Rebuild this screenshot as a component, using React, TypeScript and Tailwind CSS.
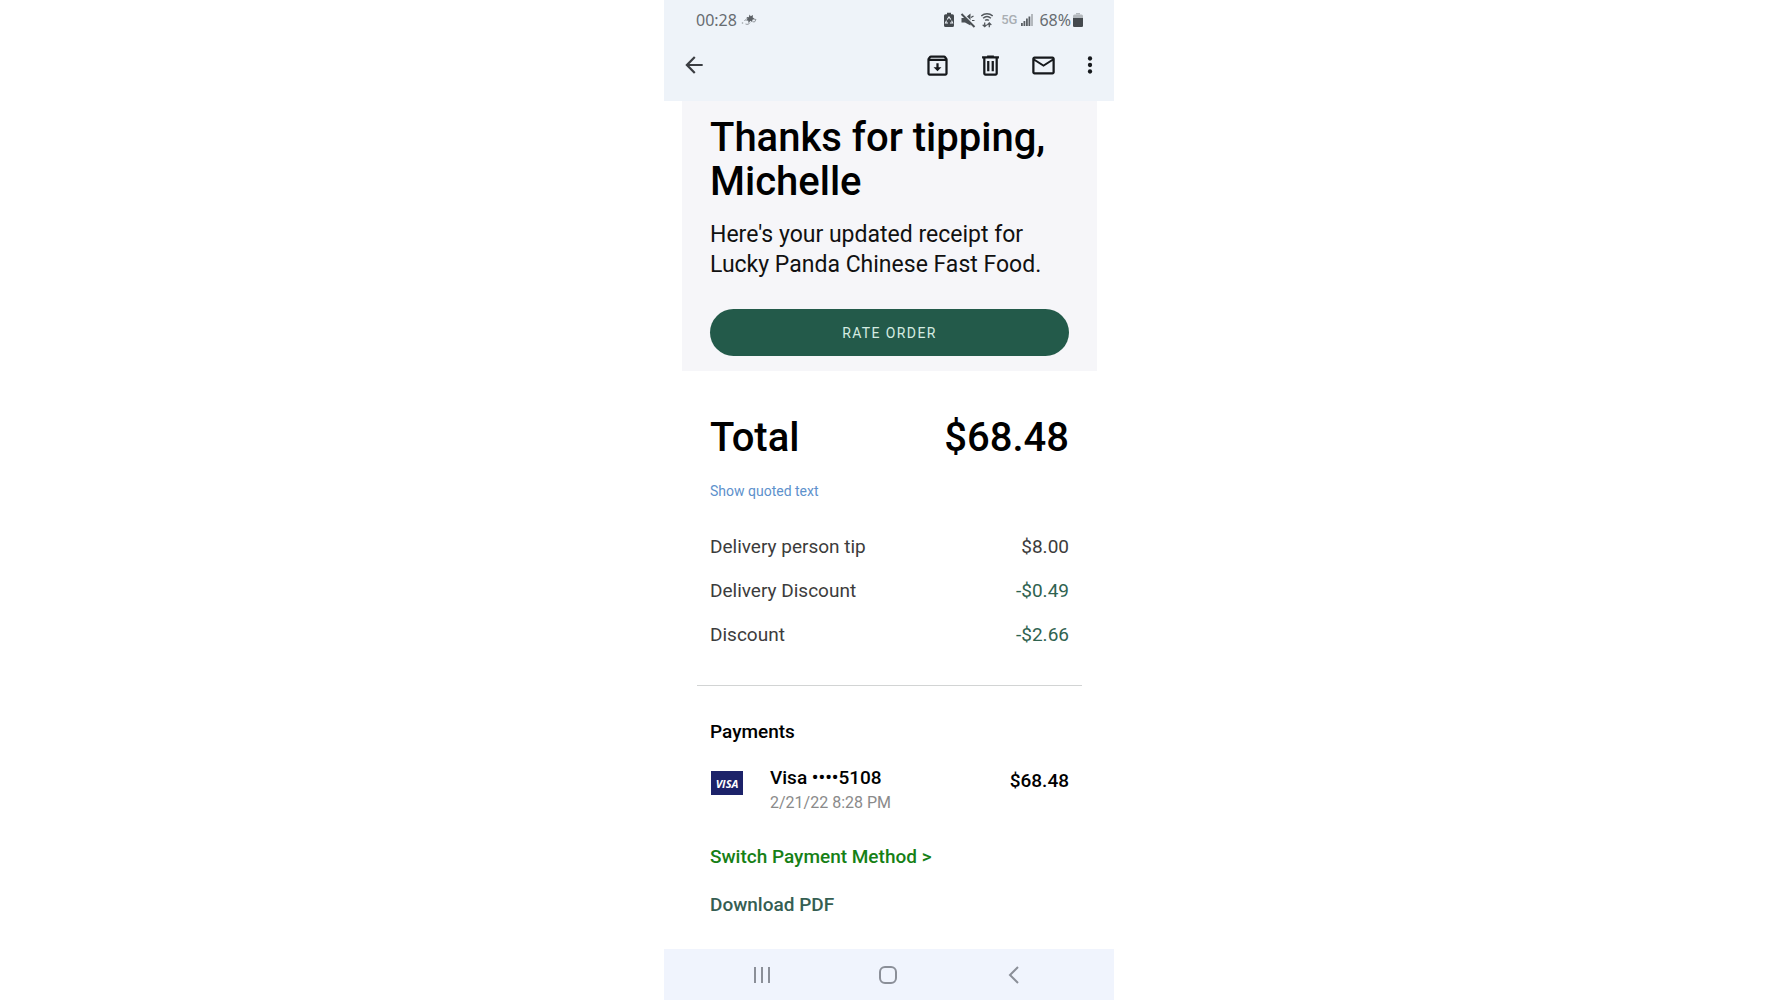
import React from "react";

type Item = { label: string; amount: string; discount?: boolean };

const items: Item[] = [
  { label: "Delivery person tip", amount: "$8.00" },
  { label: "Delivery Discount", amount: "-$0.49", discount: true },
  { label: "Discount", amount: "-$2.66", discount: true },
];

function StatusBar() {
  return (
    <div className="flex h-[39px] items-center pl-8 pr-[30px] font-['Noto_Sans',sans-serif] text-base leading-6 text-[#676c71]">
      <span>00:28</span>
      <svg className="ml-1 h-4 w-4" viewBox="0 0 16 16" fill="none" stroke="#7b8085">
        <path d="M8.500 2.500l1.200 1.800L12 3l-.3 2.500 1.800 1-2 1.200-.5 2.300-1.500-1.200L7.500 11l-.3-2.500-2 .3 1.300-2L5.500 5l2.300.2z" fill="#5c6166" stroke="none" />
        <path d="M3.500 9c1-1.500 2-2.500 3.500-2.500M4.500 12c2 .8 3.500.3 4.500-1.500M12 7l3 .5-1.500 2.500-2-.3" strokeWidth="0.8" />
        <circle cx="1.500" cy="11" r="0.800" fill="#9a9fa4" stroke="none" />
      </svg>
      <div className="ml-auto flex items-center">
        <svg className="h-4 w-3" viewBox="0 0 12 16">
          <path d="M4 .8h4v1.500h1.500A1.500 1.500 0 0 1 11 3.800v9.700a1.500 1.500 0 0 1-1.500 1.500h-7A1.500 1.500 0 0 1 1 13.500V3.800a1.500 1.500 0 0 1 1.500-1.500H4z" fill="#44494e" />
          <path d="M4.200 7.500L6 4.900l1.800 2.600M8.600 8.600l1 2.400H7M5 11H2.500l1-2.400" fill="none" stroke="#eef3f9" strokeWidth="1.100" />
        </svg>
        <svg className="ml-[5px] h-4 w-4" viewBox="0 0 16 16">
          <path d="M1.500 6H5l5.500-4.500v12L5 10.500H1.500z" fill="#4b5055" />
          <path d="M3 1.500L15.500 14" stroke="#eef3f9" strokeWidth="1.500" />
          <path d="M1.500 2L14.500 15" stroke="#4b5055" strokeWidth="2" />
          <path d="M11 5.500L13.500 4M12 8.500h2.500" stroke="#4b5055" strokeWidth="1.200" />
        </svg>
        <svg className="ml-[5px] h-4 w-3" viewBox="0 0 12 16" fill="none" stroke="#53585d" strokeWidth="1.500">
          <path d="M.3 4C3.500.9 8.500.9 11.700 4M2.100 6.300c2.300-2.100 5.500-2.100 7.800 0M4.200 8.500c1-1 2.600-1 3.600 0" />
          <path d="M3.700 10.500v4M1.700 12.700l2 2 2-2M8.300 15.200v-4M6.300 13l2-2 2 2" strokeWidth="1.300" />
        </svg>
        <span className="ml-2 font-['Roboto',sans-serif] text-[13px] font-medium text-[#a9aeb3]">5G</span>
        <svg className="ml-1 h-3 w-3" viewBox="0 0 12 12" fill="#5a5f64">
          <path d="M0 9h1.800v3H0zM2.500 7h1.800v5H2.500zM5 4.500h1.800V12H5zM7.500 2.500h1.800V12H7.500z" />
          <path d="M10 0h2v12h-2z" fill="#b3b8bd" />
        </svg>
        <span className="ml-[6px]">68%</span>
        <svg className="ml-px h-4 w-3" viewBox="0 0 12 16">
          <path d="M4 1h4v1.500H4z" fill="#b3b8bd" />
          <rect x="1" y="2.500" width="10" height="12.500" rx="1.500" fill="#b3b8bd" />
          <path d="M1 6h10v7.500a1.500 1.500 0 0 1-1.500 1.500h-7A1.500 1.500 0 0 1 1 13.500z" fill="#44494e" />
        </svg>
      </div>
    </div>
  );
}

function Toolbar() {
  return (
    <div className="flex h-[52px] items-center pl-[17px] pr-[11px] text-[#16191d]">
      <button type="button" aria-label="Back" className="text-[#3a3d42]">
        <svg className="h-[26px] w-[26px]" viewBox="0 0 24 24" fill="currentColor">
          <path d="M20 11H7.830l5.590-5.590L12 4l-8 8 8 8 1.410-1.410L7.830 13H20z" />
        </svg>
      </button>
      <div className="ml-auto flex items-center">
        <button type="button" aria-label="Archive">
          <svg className="h-[27px] w-[27px]" viewBox="0 0 24 24" fill="currentColor">
            <path d="M20.540 5.230l-1.390-1.680C18.880 3.210 18.470 3 18 3H6c-.47 0-.88.21-1.160.550L3.460 5.230C3.170 5.570 3 6.020 3 6.500V19c0 1.100.9 2 2 2h14c1.100 0 2-.9 2-2V6.500c0-.48-.17-.93-.46-1.270zM6.240 5h11.520l.83 1H5.420l.82-1zM5 19V8h14v11H5zm8-9h-2v3.500H8.500L12 17.200l3.500-3.700H13z" />
          </svg>
        </button>
        <button type="button" aria-label="Delete" className="ml-[26px]">
          <svg className="h-[27px] w-[27px]" viewBox="0 0 24 24" fill="currentColor">
            <path d="M15 3.800V3H9v.8H4.500v2h1V19c0 1.100.9 2 2 2h9c1.100 0 2-.9 2-2V5.800h1v-2zM7.500 19V5.800h9V19zM9 8h2v9H9zM13 8h2v9h-2z" />
          </svg>
        </button>
        <button type="button" aria-label="Mark as unread" className="ml-[26px]">
          <svg className="h-[27px] w-[27px]" viewBox="0 0 24 24" fill="currentColor">
            <path d="M22 6c0-1.100-.9-2-2-2H4c-1.100 0-2 .9-2 2v12c0 1.100.9 2 2 2h16c1.100 0 2-.9 2-2V6zm-2 0l-8 5-8-5h16zm0 12H4V8l8 5 8-5v10z" />
          </svg>
        </button>
        <button type="button" aria-label="More options" className="ml-5">
          <svg className="h-[26px] w-[26px]" viewBox="0 0 24 24" fill="currentColor">
            <circle cx="12" cy="6" r="2" />
            <circle cx="12" cy="12" r="2" />
            <circle cx="12" cy="18" r="2" />
          </svg>
        </button>
      </div>
    </div>
  );
}

function NavBar() {
  return (
    <nav className="mt-auto flex h-[52px] items-center justify-center gap-[98px] bg-[#f0f4fd] pr-[3px] text-[#8b8f98]">
      <button type="button" aria-label="Recent apps">
        <svg className="h-7 w-7" viewBox="0 0 28 28" stroke="currentColor" strokeWidth="2">
          <path d="M7 6v16M14 6v16M21 6v16" />
        </svg>
      </button>
      <button type="button" aria-label="Home">
        <svg className="h-7 w-7" viewBox="0 0 28 28" fill="none" stroke="currentColor" strokeWidth="2">
          <rect x="6" y="6" width="16" height="16" rx="5" />
        </svg>
      </button>
      <button type="button" aria-label="Back">
        <svg className="h-7 w-7" viewBox="0 0 28 28" fill="none" stroke="currentColor" strokeWidth="2">
          <path d="M18 6l-8 8 8 8" />
        </svg>
      </button>
    </nav>
  );
}

export default function App() {
  return (
    <div className="min-h-screen bg-white">
      <div className="mx-auto flex min-h-screen w-full max-w-[450px] flex-col font-['Roboto',sans-serif] text-black">
        <header className="bg-[#eef3f9] pb-[10px]">
          <StatusBar />
          <Toolbar />
        </header>

        <main className="pl-[18px] pr-[17px]">
          <section className="bg-[#f6f6f9] px-7 pb-[15px] pt-[15px]">
            <h1 className="text-[40px] font-medium leading-[44px]">Thanks for tipping, Michelle</h1>
            <p className="mt-4 text-[23px] leading-[30px] text-[#111111]">
              Here's your updated receipt for Lucky Panda Chinese Fast Food.
            </p>
            <button
              type="button"
              className="mt-[29px] h-[47px] w-full rounded-full bg-[#235a4a] text-sm tracking-widest text-[#d5ece2]"
            >
              RATE ORDER
            </button>
          </section>

          <section className="px-7 pt-[45px]">
            <div className="flex justify-between text-[40px] font-medium leading-[44px]">
              <h2>Total</h2>
              <span>$68.48</span>
            </div>
            <a href="#quoted" className="mt-[21px] block text-sm leading-5 text-[#5d91cc]">
              Show quoted text
            </a>
            <table className="mt-6 w-full text-[19px] text-[#3c3c3c]">
              <tbody>
                {items.map((item) => (
                  <tr key={item.label} className="h-11">
                    <th scope="row" className="p-0 text-left font-normal">
                      {item.label}
                    </th>
                    <td className={item.discount ? "p-0 text-right text-[#2f6350]" : "p-0 text-right"}>{item.amount}</td>
                  </tr>
                ))}
              </tbody>
            </table>
          </section>

          <hr className="mx-[15px] mt-7 border-[#d2d4d4]" />

          <section className="px-7 pb-8 pt-[34px] text-[19px] font-medium leading-6">
            <h3>Payments</h3>
            <div className="mt-[22px] flex items-start">
              <div className="ml-px mt-[5px] flex h-6 w-8 items-center justify-center bg-[#1c2269] font-['Open_Sans',sans-serif] text-[11px] font-bold italic leading-none text-white">
                VISA
              </div>
              <div className="ml-[27px]">
                <p>Visa ••••5108</p>
                <p className="mt-px text-base leading-6 font-normal text-[#8a8a8a]">2/21/22 8:28 PM</p>
              </div>
              <span className="ml-auto mt-[3px]">$68.48</span>
            </div>
            <a href="#switch" className="mt-[30px] block text-[#168016]">
              Switch Payment Method &gt;
            </a>
            <a href="#pdf" className="mt-6 block text-[#355e52]">
              Download PDF
            </a>
          </section>
        </main>

        <NavBar />
      </div>
    </div>
  );
}
